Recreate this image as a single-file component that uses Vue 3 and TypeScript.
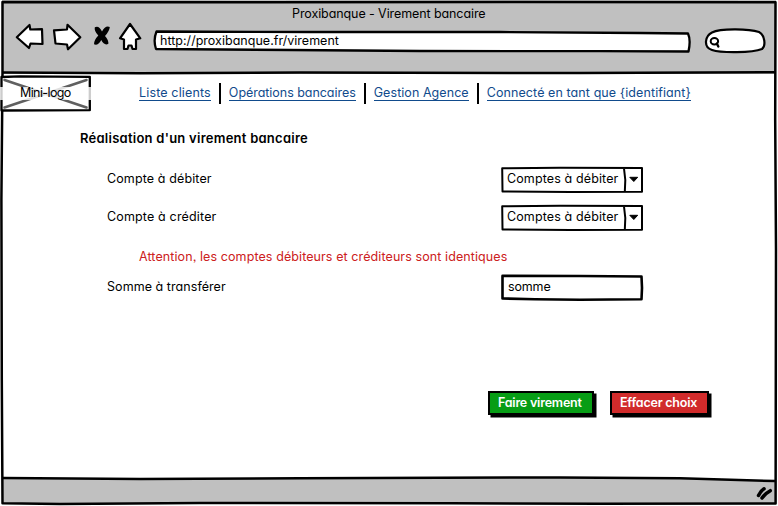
<script setup lang="ts">
interface NavLink { label: string; key: string }
interface AccountRow { label: string; key: string }

const links: NavLink[] = [
  { label: 'Liste clients', key: 'clients' },
  { label: 'Opérations bancaires', key: 'operations' },
  { label: 'Gestion Agence', key: 'agency' },
  { label: 'Connecté en tant que {identifiant}', key: 'user' },
]
const rows: AccountRow[] = [
  { label: 'Compte à débiter', key: 'debit' },
  { label: 'Compte à créditer', key: 'credit' },
]
</script>

<template>
  <div class="window">
    <header class="chrome">
      <div class="title"><span>Proxibanque - Virement bancaire</span></div>
      <div class="toolbar">
        <svg class="icons" width="130" height="34" viewBox="14 20 130 34">
          <g fill="#fff" stroke="#000" stroke-width="2.2" stroke-linejoin="round" stroke-linecap="round">
            <path d="M16.8 37.2 L29.5 25 L30.3 29.5 L42 29.2 L42.5 44 L30.5 43.5 L29 48 Z" />
            <path d="M54 30.3 L67 29.5 L67.5 24.8 L80.3 37.3 L68 49.3 L67 44.5 L55.5 43.5 Z" />
            <path d="M130 24 L140.3 38.3 L136 39.5 L136 49 L132.5 49 L131.5 45.5 L128.5 45.5 L127.5 49 L124 49 L124 39.5 L120 38.3 Z" />
          </g>
          <path d="M94.8 27.2 Q99 25 102 31.5 Q105.5 25 109.8 27 Q109.5 31 105 36 Q108.7 40 108.4 43.8 Q104.3 46 101.3 40 Q98 46 94 44.3 Q94 40 98.3 35.5 Q94 31 94.8 27.2 Z" />
        </svg>
        <div class="address">
          <svg class="outline" width="540" height="26" viewBox="152 28 540 26">
            <path d="M156.5 31.5 L310 32 L500 32 L640 33 L688 33.5 Q691 40 688.5 51.5 L600 51.2 L420 51 L290 50 L156 49 Q153 40 156.5 31.5 Z" />
          </svg>
          <span>http://proxibanque.fr/virement</span>
        </div>
        <svg class="search" width="64" height="28" viewBox="704 27 64 28">
          <path d="M712 32.5 C720 28.5 748 28.5 759 32 C765 35 766 46 762 49 C752 53 721 53 712 50 C703 47 705 36 712 32.5 Z" fill="#fff" stroke="#000" stroke-width="2.2" />
          <ellipse cx="714.4" cy="41.2" rx="3.7" ry="3.2" fill="none" stroke="#000" stroke-width="2" />
          <path d="M716.8 43.5 L718.3 46.5" stroke="#000" stroke-width="2.4" stroke-linecap="round" />
        </svg>
      </div>
    </header>

    <nav class="nav">
      <div class="logo">
        <svg class="outline" width="92" height="38" viewBox="0 74 92 38">
          <path d="M1.5 77 L20 76.3 L89.8 76.8 L89.8 110.2 L1.5 110.5 Z" class="logo-box" />
          <path d="M4.5 80 L86.5 107.5 M4.5 107.5 L86.5 80" class="logo-cross" />
        </svg>
        <span>Mini-logo</span>
      </div>
      <ul class="links">
        <li v-for="link in links" :key="link.key"><a :class="link.key">{{ link.label }}</a></li>
      </ul>
    </nav>

    <main class="page">
      <h1><span>Réalisation d'un virement bancaire</span></h1>
      <div v-for="row in rows" :key="row.key" class="row">
        <label :class="row.key">{{ row.label }}</label>
        <div class="field">
          <svg class="outline" width="144" height="28" viewBox="0 0 144 28">
            <path d="M2.2 2.2 L60 1.8 L142 2 L142 25.7 L70 26 L2.5 25.5 Z M124 2.5 L125.3 14 L124.8 26" />
            <path d="M129.8 11.3 L137.7 11.3 L133.8 15.5 Z" class="caret" />
          </svg>
          <span class="choice">Comptes à débiter</span>
        </div>
      </div>
      <p class="warning"><span>Attention, les comptes débiteurs et créditeurs sont identiques</span></p>
      <div class="row amount">
        <label class="total">Somme à transférer</label>
        <div class="field">
          <svg class="outline thick" width="144" height="28" viewBox="0 0 144 28">
            <path d="M2.5 1.9 L80 2 L141.5 2.5 L142 14 L141.5 25.3 L80 25.8 L35 25.2 L2.5 24.5 Z" />
          </svg>
          <span class="sum">somme</span>
        </div>
      </div>
      <div class="actions">
        <button class="confirm"><span>Faire virement</span></button>
        <button class="reset"><span>Effacer choix</span></button>
      </div>
    </main>

    <footer class="status"></footer>

    <svg class="frame" width="778" height="506" viewBox="0 0 778 506">
      <path d="M3 478.5 L80 479 L240 478.3 L560 477.8 L680 478.8 L775 481 L775 503 L3 503 Z" class="band" />
      <path d="M2.5 2 L260 2.3 L520 2 L775.5 2.3 L775.2 120 L776 250 L775.8 380 L775.6 503.5 L600 503.8 L450 503.3 L200 502.9 L60 504 L2.5 503.3 L1.8 380 L1.4 200 L2.5 74 Z" />
      <path d="M3 72.5 L140 73.2 L300 72.6 L580 73 L775 72.2 M3 478 L140 479 L300 478.3 L560 477.4 L680 478.3 L775 481" />
      <path d="M758.5 495.5 Q760.5 491 764 488.8 M762 498 Q765 493.5 770.3 490.7" class="grip" />
    </svg>
  </div>
</template>

<style>
body { margin: 0; background: #fff; }
</style>

<style scoped>
* { box-sizing: border-box; }
.window {
  position: relative; width: 778px; height: 506px; overflow: hidden;
  display: flex; flex-direction: column; background: #fff; color: #000;
  font-family: Inter, "Liberation Sans", sans-serif;
  font-feature-settings: "cv11", "ss03"; font-size: 12.5px; line-height: 16px;
}
span, label, a { white-space: nowrap; }
.chrome { height: 74px; margin: 0 2px; background: #c0c0c0; padding-top: 6px; }
.title { padding-left: 290px; height: 14px; letter-spacing: -.09px; }
.toolbar { display: flex; align-items: flex-start; padding-left: 12px; }
.icons { display: block; flex: none; }
.address { position: relative; width: 540px; height: 26px; margin: 8px 12px 0 8px; padding: 5px 0 0 8px; letter-spacing: .02px; }
.address span { position: relative; }
.search { margin-top: 7px; flex: none; }
.outline { position: absolute; left: 0; top: 0; overflow: visible; fill: #fff; stroke: #000; stroke-width: 2; stroke-linejoin: round; }
.address .outline { stroke-width: 2.3; }
.field .thick { stroke-width: 2.6; }
.caret { fill: #000; stroke-width: 1; }
.nav { display: flex; height: 38px; }
.logo { position: relative; z-index: 1; width: 92px; height: 38px; padding-top: 13px; }
.logo span { position: relative; display: block; height: 13px; line-height: 11px; padding-left: 20px; width: 91px; background: rgba(255, 255, 255, .8); letter-spacing: -.6px; }
.logo-box { stroke-width: 2.3; }
.logo-cross { stroke: #606060; stroke-width: 2.6; stroke-linecap: round; }
.links { display: flex; list-style: none; margin: 9px 0 0 47px; padding: 0; height: 21px; }
.links li { padding-right: 8px; margin-right: 8px; border-right: 2px solid #000; height: 21px; padding-top: 2px; }
.links li:last-child { border: 0; }
.links a { display: block; height: 15px; line-height: 15px; color: #114b8c; box-shadow: 0 1px 0 #114b8c; }
.clients { letter-spacing: .15px; }
.operations { letter-spacing: -.04px; }
.agency { letter-spacing: .06px; }
.user { letter-spacing: .09px; }
.page { display: flex; flex-direction: column; height: 366px; }
h1 { margin: 18px 0 0 80px; font-size: 13px; line-height: 16px; font-weight: 630; letter-spacing: .25px; }
.row { display: flex; height: 28px; margin: 20px 0 0 107px; }
.row + .row { margin-top: 10px; }
.row label { width: 393px; padding-top: 5px; }
.debit { letter-spacing: .12px; }
.credit { letter-spacing: .16px; }
.total { letter-spacing: .06px; }
.field { position: relative; width: 144px; height: 28px; padding: 5px 0 0 7px; }
.field span { position: relative; }
.choice { letter-spacing: .12px; }
.sum { left: 1px; letter-spacing: -.15px; }
.warning { margin: 17px 0 0 139px; height: 16px; color: #cc2020; letter-spacing: .095px; }
.page .amount { margin-top: 9px; }
.actions { display: flex; gap: 16px; margin: 89px 0 0 488px; }
button { height: 24px; border: 2px solid #000; box-shadow: 2.5px 2.5px 0 #000; color: #fff; font: inherit; font-feature-settings: inherit; font-weight: 640; padding: 0 0 0 8px; text-align: left; }
.confirm { width: 106px; background: #079d15; letter-spacing: -.21px; }
.reset { width: 99px; background: #d12b2b; letter-spacing: -.22px; }
.status { height: 28px; }
.frame { position: absolute; inset: 0; pointer-events: none; fill: none; stroke: #000; stroke-width: 2.5; stroke-linejoin: round; }
.band { fill: #c0c0c0; stroke: none; }
.grip { stroke-width: 3.5; stroke-linecap: round; }
</style>
